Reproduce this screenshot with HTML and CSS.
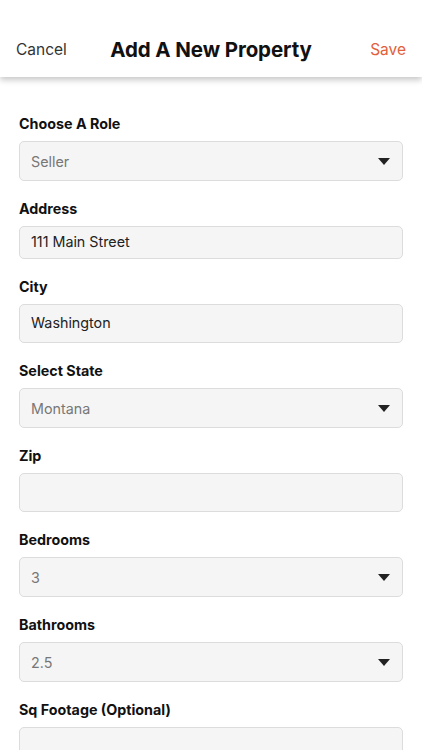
FILE: index.html
```html
<!DOCTYPE html>
<html lang="en">
<head>
  <meta charset="UTF-8">
  <title>Add A New Property</title>
  <meta name="viewport" content="width=device-width, initial-scale=1.0">
  <link rel="stylesheet" href="styles.css">
</head>
<body>

  <div class="top-bar">
    <a class="cancel-link" href="#">Cancel</a>
    <h1>Add A New Property</h1>
    <a class="save-link" href="#">Save</a>
  </div>

  <div class="form-content">
    <div class="form-group">
      <label>Choose A Role</label>
      <div class="select-box">
        <span>Seller</span>
        <span class="caret"></span>
      </div>
    </div>

    <div class="form-group">
      <label>Address</label>
      <input type="text" class="text-field short" value="111 Main Street">
    </div>

    <div class="form-group">
      <label>City</label>
      <input type="text" class="text-field" value="Washington">
    </div>

    <div class="form-group">
      <label>Select State</label>
      <div class="select-box">
        <span>Montana</span>
        <span class="caret"></span>
      </div>
    </div>

    <div class="form-group">
      <label>Zip</label>
      <input type="text" class="text-field" value="">
    </div>

    <div class="form-group">
      <label>Bedrooms</label>
      <div class="select-box">
        <span>3</span>
        <span class="caret"></span>
      </div>
    </div>

    <div class="form-group">
      <label>Bathrooms</label>
      <div class="select-box">
        <span>2.5</span>
        <span class="caret"></span>
      </div>
    </div>

    <div class="form-group">
      <label>Sq Footage (Optional)</label>
      <input type="text" class="text-field" value="">
    </div>
  </div>

</body>
</html>
```

FILE: styles.css
```css
* { margin: 0; padding: 0; box-sizing: border-box; font-family: Inter, "Liberation Sans", sans-serif; }
body {
  background: #fff;
  width: 422px;
  height: 750px;
  overflow: hidden;
}

/* HEADER */
.top-bar {
  height: 77px;
  padding: 22px 16px 0;
  display: grid;
  grid-template-columns: 1fr auto 1fr;
  align-items: center;
  background: #fff;
  box-shadow: 0 3px 6px rgba(0,0,0,0.22);
  position: relative;
  z-index: 2;
}
.top-bar h1 { font-size: 20.5px; font-weight: 700; color: #111; letter-spacing: -0.1px; }
.cancel-link { color: #333; font-size: 15.5px; text-decoration: none; justify-self: start; }
.save-link { color: #e2603b; font-size: 15.5px; text-decoration: none; justify-self: end; }

/* FORM */
.form-content { padding: 38px 19px 0; }
.form-group { margin-bottom: 19px; }
.form-group label {
  display: block;
  font-size: 14.3px;
  font-weight: 700;
  color: #111;
  line-height: 18px;
  margin-bottom: 8px;
}
.select-box, .text-field {
  width: 100%;
  height: 40px;
  background: #f5f5f5;
  border: 1px solid #dcdcdc;
  border-radius: 5px;
  padding: 0 11px;
  font-size: 14.3px;
}
.select-box {
  display: flex;
  align-items: center;
  justify-content: space-between;
  color: #777;
}
.text-field { height: 39px; color: #222; outline: none; padding-bottom: 2px; }
.text-field.short { height: 33px; }
.caret {
  width: 0;
  height: 0;
  margin-right: 1px;
  border-left: 6px solid transparent;
  border-right: 6px solid transparent;
  border-top: 7px solid #222;
}
```
